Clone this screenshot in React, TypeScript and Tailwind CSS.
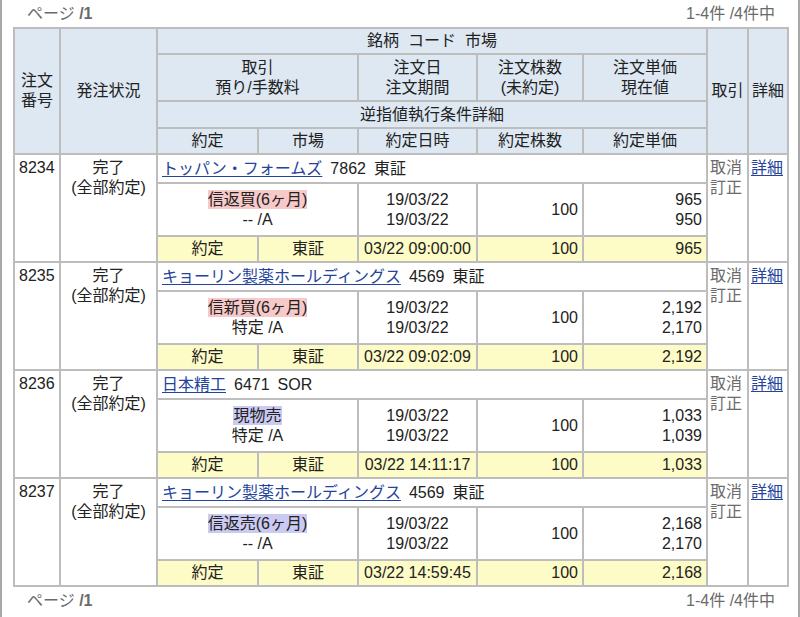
import React from 'react'

interface Order {
  id: string
  name: string
  code: string
  market: string
  kind: string
  kindColor: 'pink' | 'blue'
  account: string
  orderDate: string
  period: string
  qty: string
  price: string
  current: string
  execMarket: string
  execTime: string
  execQty: string
  execPrice: string
}

const orders: Order[] = [
  {
    id: '8234', name: 'トッパン・フォームズ', code: '7862', market: '東証',
    kind: '信返買(6ヶ月)', kindColor: 'pink', account: '-- /A',
    orderDate: '19/03/22', period: '19/03/22', qty: '100', price: '965', current: '950',
    execMarket: '東証', execTime: '03/22 09:00:00', execQty: '100', execPrice: '965',
  },
  {
    id: '8235', name: 'キョーリン製薬ホールディングス', code: '4569', market: '東証',
    kind: '信新買(6ヶ月)', kindColor: 'pink', account: '特定 /A',
    orderDate: '19/03/22', period: '19/03/22', qty: '100', price: '2,192', current: '2,170',
    execMarket: '東証', execTime: '03/22 09:02:09', execQty: '100', execPrice: '2,192',
  },
  {
    id: '8236', name: '日本精工', code: '6471', market: 'SOR',
    kind: '現物売', kindColor: 'blue', account: '特定 /A',
    orderDate: '19/03/22', period: '19/03/22', qty: '100', price: '1,033', current: '1,039',
    execMarket: '東証', execTime: '03/22 14:11:17', execQty: '100', execPrice: '1,033',
  },
  {
    id: '8237', name: 'キョーリン製薬ホールディングス', code: '4569', market: '東証',
    kind: '信返売(6ヶ月)', kindColor: 'blue', account: '-- /A',
    orderDate: '19/03/22', period: '19/03/22', qty: '100', price: '2,168', current: '2,170',
    execMarket: '東証', execTime: '03/22 14:59:45', execQty: '100', execPrice: '2,168',
  },
]

const th = 'border-2 border-[#bdbdbd] bg-[#dde8f3] font-normal text-center p-0 align-middle'
const td = 'border-2 border-[#bdbdbd] p-0 px-[4px]'
const yellow = 'border-2 border-[#bdbdbd] bg-[#fdfbc6] p-0 px-[4px]'

function Pager() {
  return (
    <div className="flex justify-between px-[14px] text-[16px] leading-[27px] text-[#6a6a6a]">
      <span>ページ <b className="font-semibold">/1</b></span>
      <span>1-4件 /4件中</span>
    </div>
  )
}

export default function App() {
  return (
    <div
      className="h-[617px] w-[800px] overflow-hidden bg-white text-[#222] border-l-2 border-r-2 border-[#a8a8a8] pl-[11px] pr-[9px]"
      style={{ fontFamily: '"Liberation Sans", "Noto Sans CJK JP", sans-serif' }}
    >
      <Pager />
      <table className="w-[774px] table-fixed border-collapse text-[16px] leading-[20px]">
        <colgroup>
          <col className="w-[46px]" />
          <col className="w-[97px]" />
          <col className="w-[101px]" />
          <col className="w-[100px]" />
          <col className="w-[119px]" />
          <col className="w-[106px]" />
          <col className="w-[124px]" />
          <col className="w-[41px]" />
          <col className="w-[40px]" />
        </colgroup>
        <thead>
          <tr className="h-[26px]">
            <th rowSpan={4} className={th}>注文<br />番号</th>
            <th rowSpan={4} className={th}>発注状況</th>
            <th colSpan={5} className={th}>銘柄&nbsp; コード&nbsp; 市場</th>
            <th rowSpan={4} className={`${th} whitespace-nowrap`}>取引</th>
            <th rowSpan={4} className={`${th} whitespace-nowrap`}>詳細</th>
          </tr>
          <tr className="h-[47px]">
            <th colSpan={2} className={th}>取引<br />預り/手数料</th>
            <th className={th}>注文日<br />注文期間</th>
            <th className={th}>注文株数<br />(未約定)</th>
            <th className={th}>注文単価<br />現在値</th>
          </tr>
          <tr className="h-[27px]">
            <th colSpan={5} className={th}>逆指値執行条件詳細</th>
          </tr>
          <tr className="h-[26px]">
            <th className={th}>約定</th>
            <th className={th}>市場</th>
            <th className={th}>約定日時</th>
            <th className={th}>約定株数</th>
            <th className={th}>約定単価</th>
          </tr>
        </thead>
        <tbody>
          {orders.map((o) => (
            <React.Fragment key={o.id}>
              <tr className="h-[29px]">
                <td rowSpan={3} className={`${td} align-top pt-[3px]`}>{o.id}</td>
                <td rowSpan={3} className={`${td} align-top pt-[3px] text-center whitespace-nowrap`}>
                  完了<br />(全部約定)
                </td>
                <td colSpan={5} className={`${td} align-middle whitespace-nowrap`}>
                  <a className="text-[#23449a] underline underline-offset-2 decoration-1">{o.name}</a>
                  <span className="ml-[8px]">{o.code}</span>
                  <span className="ml-[8px]">{o.market}</span>
                </td>
                <td rowSpan={3} className={`${td} align-top pt-[3px] pl-[2px] pr-0 text-[#6b6b6b] whitespace-nowrap`}>
                  取消<br />訂正
                </td>
                <td rowSpan={3} className={`${td} align-top pt-[3px] pl-[2px] pr-0 whitespace-nowrap`}>
                  <a className="text-[#23449a] underline underline-offset-2 decoration-1">詳細</a>
                </td>
              </tr>
              <tr className="h-[53px]">
                <td colSpan={2} className={`${td} text-center align-middle`}>
                  <span className={o.kindColor === 'pink' ? 'bg-[#f8c9c9] py-[1px]' : 'bg-[#cacaf3] py-[1px]'}>{o.kind}</span>
                  <br />
                  {o.account}
                </td>
                <td className={`${td} text-center align-middle`}>
                  {o.orderDate}<br />{o.period}
                </td>
                <td className={`${td} text-right align-middle`}>{o.qty}</td>
                <td className={`${td} text-right align-middle`}>
                  {o.price}<br />{o.current}
                </td>
              </tr>
              <tr className="h-[26px]">
                <td className={`${yellow} text-center`}>約定</td>
                <td className={`${yellow} text-center`}>{o.execMarket}</td>
                <td className={`${yellow} text-center whitespace-nowrap`}>{o.execTime}</td>
                <td className={`${yellow} text-right`}>{o.execQty}</td>
                <td className={`${yellow} text-right`}>{o.execPrice}</td>
              </tr>
            </React.Fragment>
          ))}
        </tbody>
      </table>
      <Pager />
    </div>
  )
}
